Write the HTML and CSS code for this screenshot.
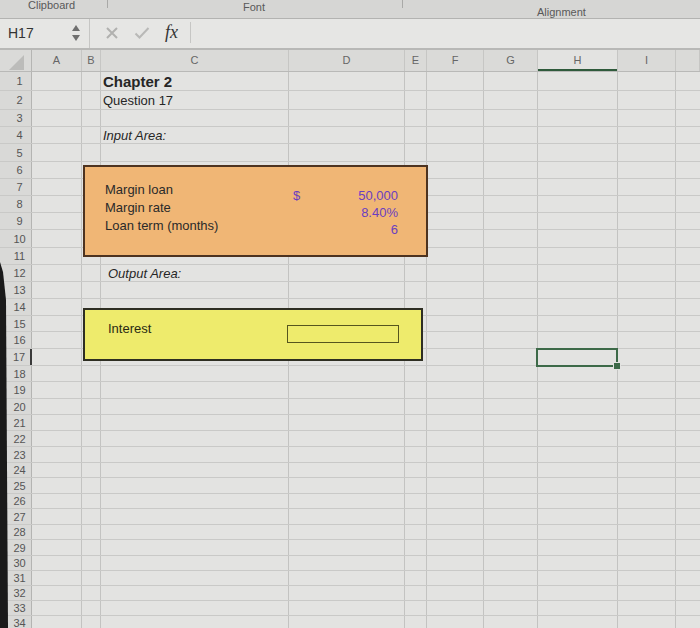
FILE: index.html
```html
<!DOCTYPE html>
<html>
<head>
<meta charset="utf-8">
<title>Chapter 2 - Question 17</title>
<link rel="stylesheet" href="styles.css">
</head>
<body>
<div class="screen">
  <div class="ribbon">
    <span class="rl rl-clip">Clipboard</span>
    <span class="tick"></span>
    <span class="rl rl-font">Font</span>
    <span class="tick"></span>
    <span class="rl rl-align">Alignment</span>
  </div>
  <div class="fbar">
    <div class="namebox">
      <span class="ref">H17</span>
      <svg class="spin" width="10" height="18" viewBox="0 0 10 18"><polygon points="5,1 9,7 1,7" fill="#6f6f6f"/><polygon points="1,11 9,11 5,17" fill="#6f6f6f"/></svg>
    </div>
    <div class="fbtns">
      <svg class="ic-x" width="14" height="14" viewBox="0 0 14 14"><path d="M2 2 L12 12 M12 2 L2 12" stroke="#b1b1af" stroke-width="2" fill="none"/></svg>
      <svg class="ic-ok" width="16" height="14" viewBox="0 0 16 14"><path d="M1.5 7.5 L5.5 11.5 L14.5 2" stroke="#b9b9b7" stroke-width="2" fill="none"/></svg>
      <span class="fx">fx</span>
    </div>
    <div class="finput"></div>
  </div>
  <div class="colhdr">
    <span class="corner"><svg width="18" height="18" viewBox="0 0 18 18"><polygon points="17,2 17,17 2,17" fill="#bcbcba"/></svg></span>
    <span>A</span><span>B</span><span>C</span><span>D</span><span>E</span><span>F</span><span>G</span><span class="hsel">H</span><span>I</span><span></span>
  </div>
  <div class="rows">
    <div class="row"><span class="rn">1</span><span class="cc chapter">Chapter 2</span></div>
    <div class="row"><span class="rn">2</span><span class="cc">Question 17</span></div>
    <div class="row"><span class="rn">3</span></div>
    <div class="row"><span class="rn">4</span><span class="cc it">Input Area:</span></div>
    <div class="row"><span class="rn">5</span></div>
    <div class="row"><span class="rn">6</span></div>
    <div class="row"><span class="rn">7</span></div>
    <div class="row"><span class="rn">8</span></div>
    <div class="row"><span class="rn">9</span></div>
    <div class="row"><span class="rn">10</span></div>
    <div class="row"><span class="rn">11</span></div>
    <div class="row"><span class="rn">12</span><span class="cc it out">Output Area:</span></div>
    <div class="row"><span class="rn">13</span></div>
    <div class="row"><span class="rn">14</span></div>
    <div class="row"><span class="rn">15</span></div>
    <div class="row"><span class="rn">16</span></div>
    <div class="row"><span class="rn sel">17</span></div>
    <div class="row"><span class="rn">18</span></div>
    <div class="row"><span class="rn">19</span></div>
    <div class="row"><span class="rn">20</span></div>
    <div class="row"><span class="rn">21</span></div>
    <div class="row"><span class="rn">22</span></div>
    <div class="row"><span class="rn">23</span></div>
    <div class="row"><span class="rn">24</span></div>
    <div class="row"><span class="rn">25</span></div>
    <div class="row"><span class="rn">26</span></div>
    <div class="row"><span class="rn">27</span></div>
    <div class="row"><span class="rn">28</span></div>
    <div class="row"><span class="rn">29</span></div>
    <div class="row"><span class="rn">30</span></div>
    <div class="row"><span class="rn">31</span></div>
    <div class="row"><span class="rn">32</span></div>
    <div class="row"><span class="rn">33</span></div>
    <div class="row"><span class="rn">34</span></div>
  </div>

  <div class="shape input">
    <div class="labels">
      <div>Margin loan</div>
      <div>Margin rate</div>
      <div>Loan term (months)</div>
    </div>
    <div class="dollar">$</div>
    <div class="values">
      <div>50,000</div>
      <div>8.40%</div>
      <div>6</div>
    </div>
  </div>

  <div class="shape output">
    <div class="olabel">Interest</div>
    <div class="obox"></div>
  </div>

  <div class="selcell"><span class="handle"></span></div>
  <div class="edge"></div>
</div>
</body>
</html>
```

FILE: styles.css
```css
html, body {
  margin: 0;
  padding: 0;
}
body {
  width: 700px;
  height: 628px;
  overflow: hidden;
  background: #e2e2e0;
  font-family: "Liberation Sans", Arial, sans-serif;
}
.screen {
  --cols: 32px 50px 19px 188px 116px 22px 57px 54px 80px 58px 24px;
  --gl: #c3c3c1;
  position: relative;
  width: 700px;
  height: 628px;
  overflow: hidden;
  background: #e2e2e0;
}

/* ribbon */
.ribbon {
  height: 18px;
  background: #d6d6d4;
  border-bottom: 1px solid #b3b3b1;
  display: grid;
  grid-template-columns: 107px 1px 294px 1px 1fr;
  font-size: 11px;
  line-height: 13px;
  color: #595959;
}
.rl-clip { padding-left: 28px; margin-top: -1px; }
.rl-font { padding-left: 135px; margin-top: 1px; }
.rl-align { padding-left: 134px; margin-top: 6px; }
.tick {
  background: #a9a9a7;
  height: 8px;
}

/* formula bar */
.fbar {
  height: 29px;
  display: flex;
  background: #e6e6e4;
  border-bottom: 2px solid #b8b8b6;
}
.namebox {
  width: 90px;
  box-sizing: border-box;
  border-right: 1px solid #c6c6c4;
  display: flex;
  align-items: center;
  padding: 0 8px 2px 8px;
}
.ref {
  font-size: 14px;
  color: #333;
}
.spin {
  margin-left: auto;
}
.fbtns {
  width: 101px;
  box-sizing: border-box;
  border-right: 1px solid #c6c6c4;
  margin: 3px 0 5px 0;
  display: flex;
  align-items: center;
  padding-left: 15px;
}
.ic-ok { margin-left: 15px; }
.fx {
  margin-left: 15px;
  font-family: "Liberation Serif", "Times New Roman", serif;
  font-style: italic;
  font-size: 18px;
  color: #333;
}
.finput { flex: 1; }

/* column header */
.colhdr {
  height: 22px;
  box-sizing: border-box;
  display: grid;
  grid-template-columns: var(--cols);
  background: #dadad8;
  border-bottom: 1px solid #b9b9b7;
}
.colhdr span {
  border-right: 1px solid #c6c6c4;
  text-align: center;
  font-size: 11px;
  line-height: 21px;
  color: #666;
}
.colhdr .corner {
  display: flex;
  align-items: flex-end;
  justify-content: center;
  border-right-color: #b5b5b3;
}
.colhdr .hsel {
  background: #e3e3e1;
  box-shadow: inset 0 -2px 0 #2f5a3b;
}

/* rows */
.rows {
  display: grid;
  grid-template-rows: 19px 19px 17px 17px 18px 17px 17px 17px 17px 18px
                      17px 17px 17px 17px 16px 17px 17px 16px 17px 16px
                      16px 16px 16px 15px 16px 15px 16px 15px 16px 15px
                      15px 15px 15px 15px;
  background:
    linear-gradient(var(--gl), var(--gl)) 81px 0 / 1px 100% no-repeat,
    linear-gradient(var(--gl), var(--gl)) 100px 0 / 1px 100% no-repeat,
    linear-gradient(var(--gl), var(--gl)) 288px 0 / 1px 100% no-repeat,
    linear-gradient(var(--gl), var(--gl)) 404px 0 / 1px 100% no-repeat,
    linear-gradient(var(--gl), var(--gl)) 426px 0 / 1px 100% no-repeat,
    linear-gradient(var(--gl), var(--gl)) 483px 0 / 1px 100% no-repeat,
    linear-gradient(var(--gl), var(--gl)) 537px 0 / 1px 100% no-repeat,
    linear-gradient(var(--gl), var(--gl)) 617px 0 / 1px 100% no-repeat,
    linear-gradient(var(--gl), var(--gl)) 675px 0 / 1px 100% no-repeat,
    #e3e3e1;
}
.row {
  display: grid;
  grid-template-columns: var(--cols);
  box-sizing: border-box;
  border-bottom: 1px solid #c9c9c7;
  min-height: 0;
}
.rn {
  grid-column: 1;
  background: #d9d9d7;
  border-right: 1px solid #b4b4b2;
  display: flex;
  align-items: center;
  justify-content: center;
  padding-left: 8px;
  font-size: 11px;
  color: #555;
}
.rn.sel {
  border-right: 2px solid #3a3a3a;
}
.cc {
  grid-column: 4 / span 4;
  align-self: center;
  white-space: nowrap;
  padding-left: 2px;
  font-size: 13px;
  color: #262626;
}
.chapter {
  font-weight: bold;
  font-size: 15px;
}
.it { font-style: italic; }
.out { padding-left: 7px; }

/* shapes over the grid */
.shape {
  position: absolute;
  box-sizing: border-box;
}
.input {
  left: 83px;
  top: 165px;
  width: 345px;
  height: 92px;
  background: #f0b675;
  border: 2px solid #4d3320;
  display: flex;
  padding: 14px 28px 0 20px;
  font-size: 13px;
  color: #2a2a2a;
}
.labels {
  width: 188px;
  line-height: 18px;
}
.dollar {
  margin-top: 6px;
  line-height: 17px;
  color: #6a3ec0;
}
.values {
  margin-left: auto;
  margin-top: 6px;
  line-height: 17px;
  text-align: right;
  color: #6a3ec0;
}
.output {
  left: 83px;
  top: 308px;
  width: 340px;
  height: 53px;
  background: #eeeb6c;
  border: 2px solid #2e2e22;
  padding: 10px 0 0 23px;
  font-size: 13px;
  line-height: 17px;
  color: #2a2a14;
}
.obox {
  position: absolute;
  left: 202px;
  top: 15px;
  width: 112px;
  height: 18px;
  box-sizing: border-box;
  border: 1.5px solid #56551e;
}
.selcell {
  position: absolute;
  left: 536px;
  top: 348px;
  width: 82px;
  height: 19px;
  box-sizing: border-box;
  border: 2px solid #3d6a48;
}
.handle {
  position: absolute;
  right: -5px;
  bottom: -5px;
  width: 6px;
  height: 6px;
  background: #3d6a48;
  border: 1px solid #e3e3e1;
}
.edge {
  position: absolute;
  left: 0;
  top: 0;
  width: 12px;
  height: 628px;
  background: #1a1a1a;
  clip-path: polygon(0 262px, 3px 272px, 6px 300px, 8px 628px, 0 628px);
}
```
